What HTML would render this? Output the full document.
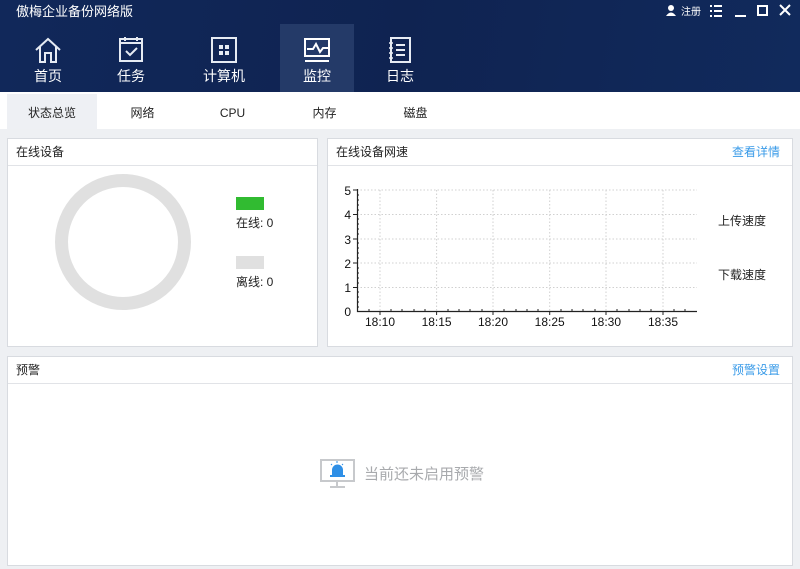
<!DOCTYPE html>
<html><head><meta charset="utf-8"><style>
*{margin:0;padding:0;box-sizing:border-box}
body{width:800px;height:569px;overflow:hidden;background:#eef0f3;font-family:"Liberation Sans","Noto Sans CJK SC",sans-serif;position:relative;color:#222}
.hdr{position:absolute;left:0;top:0;width:800px;height:92px;background:linear-gradient(100deg,#11285a 0%,#0f2351 50%,#112a5c 100%)}
.title{position:absolute;left:16px;top:1px;color:#fff;font-size:13px}
.nav{position:absolute;top:24px;height:68px;width:74px;color:#fff;text-align:center;font-size:14px}
.nav svg{position:absolute;left:50%;transform:translateX(-50%);top:12px}
.nav span{position:absolute;left:0;right:0;top:42px}
.tabs{position:absolute;left:0;top:92px;width:800px;height:37px;background:#fff}
.tab{position:absolute;top:2px;height:35px;line-height:38px;font-size:12px;text-align:center}
.panel{position:absolute;background:#fff;border:1px solid #d8dbe0}
.ph{height:27px;line-height:27px;border-bottom:1px solid #e1e3e7;padding-left:8px;font-size:12px;position:relative}
.ph a{position:absolute;right:12px;top:0;color:#3a9be8;text-decoration:none}
.t{position:absolute;font-size:12px}
</style></head><body>
<div class="hdr">
<div class="title">傲梅企业备份网络版</div>
<svg style="position:absolute;left:660px;top:0" width="140" height="24" fill="#fff" stroke="#fff">
<circle cx="11" cy="8" r="3" stroke="none"/><path d="M6 16 Q11 9 16 16Z" stroke="none"/>
<text x="21" y="15" font-size="10" stroke="none" font-family="Noto Sans CJK SC">注册</text>
<g stroke-width="2"><path d="M50 6h2M50 11h2M50 16h2M54 6h8M54 11h8M54 16h8"/><path d="M75 16h11"/><rect x="98" y="6" width="9" height="9" fill="none"/><path d="M120 5l10 10M130 5l-10 10"/></g>
</svg>
<div class="nav" style="left:11px"><svg width="28" height="28" fill="none" stroke="#e6ebf3" stroke-width="2"><path d="M2 14L14 3L26 14M6 11V26H11V17H17V26H22V11"/></svg><span>首页</span></div>
<div class="nav" style="left:94px"><svg width="28" height="28" fill="none" stroke="#e6ebf3" stroke-width="2"><rect x="3" y="3" width="22" height="22"/><path d="M8 1v4M20 1v4M3 7h22" /><path d="M9 15l4 4 7-7"/></svg><span>任务</span></div>
<div class="nav" style="left:187px"><svg width="28" height="28" fill="none" stroke="#e6ebf3" stroke-width="2"><rect x="2" y="2" width="24" height="24"/><path d="M9 9h4v4H9zM15 9h4v4h-4zM9 15h4v4H9zM15 15h4v4h-4z" fill="#e6ebf3" stroke="none"/></svg><span>计算机</span></div>
<div class="nav" style="left:280px;background:#243a68"><svg width="28" height="28" fill="none" stroke="#fff" stroke-width="2"><rect x="2" y="3" width="24" height="17"/><path d="M4 13h6l3-5 4 8 3-4h5M2 25h24"/></svg><span>监控</span></div>
<div class="nav" style="left:363px"><svg width="28" height="28" fill="none" stroke="#e6ebf3" stroke-width="2"><rect x="5" y="2" width="19" height="24"/><path d="M10 9h9M10 14h9M10 19h9"/><path d="M3 7h4M3 12h4M3 17h4M3 22h4" stroke-width="1.5"/></svg><span>日志</span></div>
</div>
<div class="tabs">
<div class="tab" style="left:7px;width:90px;background:#eef0f4">状态总览</div>
<div class="tab" style="left:110px;width:65px">网络</div>
<div class="tab" style="left:200px;width:65px">CPU</div>
<div class="tab" style="left:292px;width:65px">内存</div>
<div class="tab" style="left:383px;width:65px">磁盘</div>
</div>
<div class="panel" style="left:7px;top:138px;width:311px;height:209px"><div class="ph">在线设备</div></div>
<svg style="position:absolute;left:0;top:0" width="330" height="350"><circle cx="123" cy="242" r="61.5" fill="none" stroke="#e0e0e0" stroke-width="13"/><rect x="236" y="197" width="28" height="13" fill="#31bb31"/><rect x="236" y="256" width="28" height="13" fill="#e0e0e0"/></svg>
<div class="t" style="left:236px;top:214px">在线: 0</div>
<div class="t" style="left:236px;top:273px">离线: 0</div>
<div class="panel" style="left:327px;top:138px;width:466px;height:209px"><div class="ph">在线设备网速<a>查看详情</a></div></div>
<svg style="position:absolute;left:0;top:0" width="800" height="350" font-family="Liberation Sans" font-size="12" fill="#111">
<g stroke="#d0d0d0" stroke-dasharray="1.5,2"><path d="M357 190H697M357 214.5H697M357 239H697M357 263H697M357 287.5H697"/><path d="M380 190V311M436.6 190V311M493 190V311M549.7 190V311M606 190V311M663 190V311"/></g>
<path d="M357.5 189V311.5H697" fill="none" stroke="#222" stroke-width="1.2"/>
<g stroke="#222"><path d="M353 190h4M353 214.5h4M353 239h4M353 263h4M353 287.5h4M380 311v4M436.6 311v4M493 311v4M549.7 311v4M606 311v4M663 311v4"/>
<path d="M357 195h2M357 200h2M357 205h2M357 210h2M357 219h2M357 224h2M357 229h2M357 234h2M357 243h2M357 248h2M357 253h2M357 258h2M357 268h2M357 273h2M357 278h2M357 283h2M357 292h2M357 297h2M357 302h2M357 307h2M369 309v2M391 309v2M402 309v2M414 309v2M425 309v2M448 309v2M459 309v2M470 309v2M482 309v2M504 309v2M516 309v2M527 309v2M538 309v2M561 309v2M572 309v2M583 309v2M595 309v2M617 309v2M629 309v2M640 309v2M651 309v2M674 309v2M685 309v2"/></g>
<g text-anchor="end"><text x="351" y="195">5</text><text x="351" y="219">4</text><text x="351" y="244">3</text><text x="351" y="268">2</text><text x="351" y="292">1</text><text x="351" y="316">0</text></g>
<g text-anchor="middle"><text x="380" y="326">18:10</text><text x="436.6" y="326">18:15</text><text x="493" y="326">18:20</text><text x="549.7" y="326">18:25</text><text x="606" y="326">18:30</text><text x="663" y="326">18:35</text></g>
</svg>
<div class="t" style="left:718px;top:212px">上传速度</div>
<div class="t" style="left:718px;top:266px">下载速度</div>
<div class="panel" style="left:7px;top:356px;width:786px;height:210px"><div class="ph">预警<a>预警设置</a></div></div>
<svg style="position:absolute;left:320px;top:458px" width="36" height="32" fill="none" stroke="#c7c9cc" stroke-width="2"><rect x="1" y="2" width="33" height="21"/><path d="M17 23v5M10 29h15"/><path d="M12 17v-5a5.5 5.5 0 0 1 11 0v5z" fill="#2e8fe6" stroke="none"/><path d="M10 18h15" stroke="#2e8fe6"/><path d="M17 3v2M11 6l1 1M23 6l-1 1" stroke="#2e8fe6" stroke-width="1"/></svg>
<div class="t" style="left:364px;top:463px;font-size:15px;color:#a8aaad">当前还未启用预警</div>
</body></html>
